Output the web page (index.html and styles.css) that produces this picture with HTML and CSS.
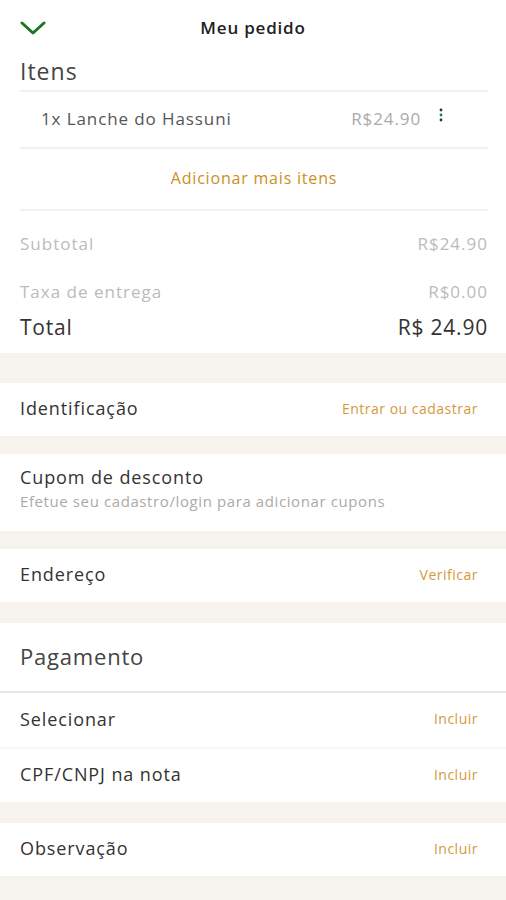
FILE: index.html
```html
<!DOCTYPE html>
<html lang="pt-BR">
<head>
    <meta charset="UTF-8">
    <meta name="viewport" content="width=device-width, initial-scale=1.0">
    <title>Meu pedido</title>
    <link rel="stylesheet" href="styles.css">
</head>
<body>
    <header class="topbar">
        <svg class="back" width="26" height="14" viewBox="0 0 26 14">
            <polyline points="2,2 13,12 24,2" fill="none" stroke="#1b7524" stroke-width="3" stroke-linecap="round" stroke-linejoin="round"/>
        </svg>
        <span class="topbar-title">Meu pedido</span>
    </header>

    <section class="card items">
        <h2 class="items-title">Itens</h2>
        <div class="item-row">
            <span class="item-name">1x Lanche do Hassuni</span>
            <span class="item-price">R$24.90</span>
            <svg class="kebab" width="4" height="14" viewBox="0 0 4 14">
                <circle cx="2" cy="2" r="1.4" fill="#1f3a24"/>
                <circle cx="2" cy="7" r="1.4" fill="#2e7a3a"/>
                <circle cx="2" cy="12" r="1.4" fill="#1f3a24"/>
            </svg>
        </div>
        <div class="add-more">Adicionar mais itens</div>
        <div class="summary">
            <div class="sum-row">
                <span>Subtotal</span>
                <span>R$24.90</span>
            </div>
            <div class="sum-row">
                <span>Taxa de entrega</span>
                <span>R$0.00</span>
            </div>
            <div class="total-row">
                <span>Total</span>
                <span>R$ 24.90</span>
            </div>
        </div>
    </section>

    <div class="gap tall"></div>

    <section class="card row">
        <span class="label">Identificação</span>
        <span class="action">Entrar ou cadastrar</span>
    </section>

    <div class="gap"></div>

    <section class="card coupon">
        <span class="label">Cupom de desconto</span>
        <span class="hint">Efetue seu cadastro/login para adicionar cupons</span>
    </section>

    <div class="gap"></div>

    <section class="card row">
        <span class="label">Endereço</span>
        <span class="action">Verificar</span>
    </section>

    <div class="gap wide"></div>

    <section class="card">
        <h2 class="pay-title">Pagamento</h2>
        <div class="row bordered">
            <span class="label">Selecionar</span>
            <span class="action">Incluir</span>
        </div>
        <div class="row">
            <span class="label">CPF/CNPJ na nota</span>
            <span class="action">Incluir</span>
        </div>
    </section>

    <div class="gap wide"></div>

    <section class="card row">
        <span class="label">Observação</span>
        <span class="action">Incluir</span>
    </section>

    <div class="gap tall"></div>
</body>
</html>
```

FILE: styles.css
```css
body {
    margin: 0;
    background-color: #f6f2ee;
    font-family: "Open Sans", "Noto Sans", sans-serif;
    color: #333;
}

.card {
    background-color: #ffffff;
}

.topbar {
    position: relative;
    height: 56px;
    padding-bottom: 2px;
    box-sizing: border-box;
    display: flex;
    align-items: center;
    justify-content: center;
    background-color: #ffffff;
}

.back {
    position: absolute;
    left: 20px;
    top: 21px;
}

.topbar-title {
    font-size: 17px;
    font-weight: 600;
    letter-spacing: 0.8px;
    color: #222;
}

.items {
    padding: 0 18px 0 20px;
}

.items-title {
    margin: 0;
    font-size: 23px;
    font-weight: normal;
    letter-spacing: 1px;
    color: #444;
    height: 34px;
    line-height: 30px;
    border-bottom: 2px solid #f1f1f1;
}

.item-row {
    display: flex;
    align-items: center;
    height: 57px;
    padding: 0 0 3px 21px;
    box-sizing: border-box;
    border-bottom: 2px solid #f1f1f1;
    font-size: 17px;
    letter-spacing: 0.9px;
}

.item-name {
    flex: 1;
    color: #555;
}

.item-price {
    color: #aaa;
    margin-right: 18px;
}

.kebab {
    margin-right: 45px;
    margin-top: -6px;
}

.add-more {
    height: 60px;
    line-height: 58px;
    text-align: center;
    color: #cc8f22;
    font-size: 16px;
    letter-spacing: 0.8px;
    border-bottom: 2px solid #f1f1f1;
}

.summary {
    padding: 12px 0;
}

.sum-row,
.total-row {
    display: flex;
    justify-content: space-between;
    font-size: 17px;
    letter-spacing: 1px;
    color: #bbb;
}

.sum-row {
    line-height: 42px;
}

.sum-row + .sum-row {
    margin-top: 6px;
}

.total-row {
    font-size: 21px;
    letter-spacing: 0.8px;
    line-height: 28px;
    color: #333;
}

.gap {
    height: 18px;
}

.gap.wide {
    height: 21px;
}

.gap.tall {
    height: 30px;
}

.row {
    display: flex;
    align-items: center;
    justify-content: space-between;
    height: 53px;
    padding: 0 28px 3px 20px;
    box-sizing: border-box;
}

.label {
    font-size: 18px;
    letter-spacing: 0.9px;
    color: #333;
}

.action {
    font-size: 14px;
    letter-spacing: 0.5px;
    color: #d39a3c;
}

.coupon {
    height: 77px;
    padding: 11px 20px 0;
    box-sizing: border-box;
    display: flex;
    flex-direction: column;
    gap: 2px;
}

.hint {
    font-size: 15px;
    letter-spacing: 0.6px;
    color: #aaa;
}

.pay-title {
    margin: 0;
    height: 68px;
    line-height: 66px;
    padding-left: 20px;
    font-size: 22px;
    font-weight: normal;
    letter-spacing: 0.8px;
    color: #444;
    border-bottom: 2px solid #e8e8e8;
}

.row.bordered {
    height: 56px;
    border-bottom: 2px solid #f6f6f6;
}
```
